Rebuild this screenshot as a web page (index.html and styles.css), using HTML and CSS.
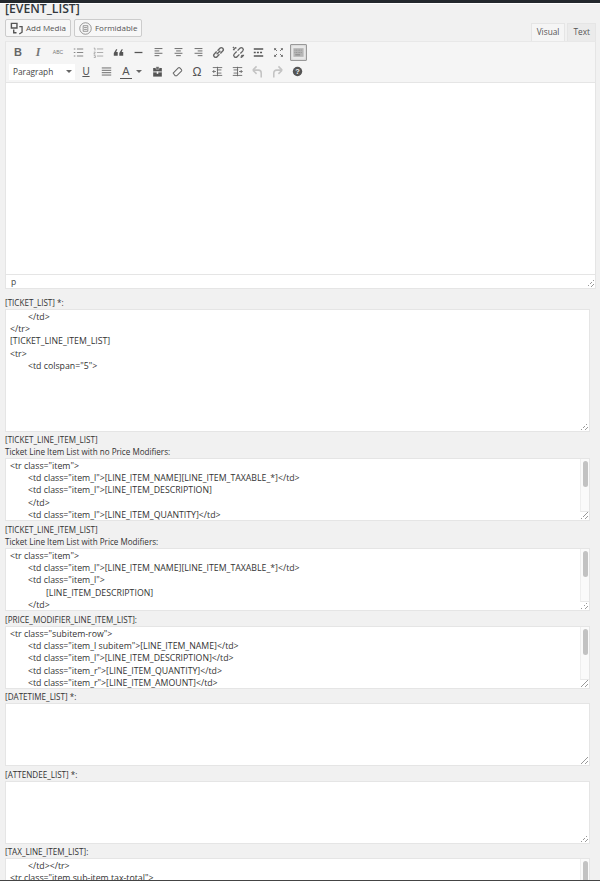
FILE: index.html
```html
<!DOCTYPE html>
<html lang="en">
<head>
<meta charset="utf-8">
<title>Event list editor</title>
<link rel="stylesheet" href="styles.css">
</head>
<body>
<main class="page">
  <h2 class="title">[EVENT_LIST]</h2>
  <div class="editor-head">
    <div class="media-buttons">
      <button class="btn"><svg class="btn-ic" viewBox="0 0 14 14"><path d="M1.500 1.500h6v5h-6z" fill="none" stroke="#555" stroke-width="1.500"/><path d="M4 8v3.500h3" fill="none" stroke="#555" stroke-width="1.500"/><path d="M10 5h3v6l-3 2" fill="none" stroke="#555" stroke-width="1.400"/></svg>Add Media</button>
      <button class="btn"><svg class="btn-ic" viewBox="0 0 14 14"><circle cx="7" cy="7" r="6.200" fill="none" stroke="#777" stroke-width=".8"/><path d="M4.500 4h5v6h-5z M5.500 6h3 M5.500 8h3" fill="none" stroke="#777" stroke-width=".8"/></svg>Formidable</button>
    </div>
    <div class="tabs"><span class="tab tab-on">Visual</span><span class="tab">Text</span></div>
  </div>
  <section class="editor">
    <div class="toolbar">
      <div class="tool-row">
        <span class="ti ti-b">B</span>
        <span class="ti ti-i">I</span>
        <span class="ti ti-abc">ABC</span>
        <span class="ti"><svg viewBox="0 0 14 14"><path d="M1 2.500h2M5 2.500h8M1 7h2M5 7h8M1 11.500h2M5 11.500h8" stroke="#888" stroke-width="1.300"/></svg></span>
        <span class="ti"><svg viewBox="0 0 14 14"><path d="M1 1.500h1.500v3M1 6.500h2L1 9h2M1 11h2v2.500H1M5 2.500h8M5 7h8M5 11.500h8" fill="none" stroke="#999" stroke-width="1"/></svg></span>
        <span class="ti"><svg viewBox="0 0 14 14"><path d="M1 11V7.500L4 3h1.500L4 6.500h2V11zM8 11V7.500L11 3h1.500L11 6.500h2V11z" fill="#555"/></svg></span>
        <span class="ti"><svg viewBox="0 0 14 14"><path d="M2 7h10" stroke="#555" stroke-width="1.600"/></svg></span>
        <span class="ti"><svg viewBox="0 0 14 14"><path d="M2 2h10M2 5h6M2 8h10M2 11h6" stroke="#666" stroke-width="1.200"/></svg></span>
        <span class="ti"><svg viewBox="0 0 14 14"><path d="M2 2h10M4 5h6M2 8h10M4 11h6" stroke="#666" stroke-width="1.200"/></svg></span>
        <span class="ti"><svg viewBox="0 0 14 14"><path d="M2 2h10M6 5h6M2 8h10M6 11h6" stroke="#666" stroke-width="1.200"/></svg></span>
        <span class="ti ti-lg"><svg viewBox="0 0 14 14"><path d="M5 9 9 5M5 6 2.500 8.500a2 2 0 0 0 3 3L8 9M6 5l2.500-2.500a2 2 0 0 1 3 3L9 8" fill="none" stroke="#666" stroke-width="1.500"/></svg></span>
        <span class="ti ti-lg"><svg viewBox="0 0 14 14"><path d="M5 6 2.500 8.500a2 2 0 0 0 3 3L8 9M6 5l2.500-2.500a2 2 0 0 1 3 3L9 8M1 1l2 2M12 12l-2-2M4 1v2M1 4h2M10 13v-2M13 10h-2" fill="none" stroke="#666" stroke-width="1.400"/></svg></span>
        <span class="ti"><svg viewBox="0 0 14 14"><path d="M1 2.500h12M1 11.500h12" stroke="#555" stroke-width="2"/><path d="M1 7h2.500M5 7h2.500M9 7h2.500" stroke="#555" stroke-width="1.600"/></svg></span>
        <span class="ti"><svg viewBox="0 0 14 14"><path d="M2 2l3 3M12 2 9 5M2 12l3-3M12 12 9 9" stroke="#666" stroke-width="1.200"/><path d="M1.500 1.500h3l-3 3zM12.500 1.500v3l-3-3zM1.500 12.500v-3l3 3zM12.500 12.500h-3l3-3z" fill="#666"/></svg></span>
        <span class="ti ti-active"><svg viewBox="0 0 14 14"><rect x=".5" y="1.500" width="13" height="11" fill="#b5b5b5"/><path d="M2 4h10M2 7h10" stroke="#888" stroke-dasharray="1 1"/><path d="M3 10h6" stroke="#777"/></svg></span>
      </div>
      <div class="tool-row">
        <span class="select">Paragraph<i class="caret"></i></span>
        <span class="ti ti-u">U</span>
        <span class="ti"><svg viewBox="0 0 14 14"><path d="M1 2.500h12M1 5.500h12M1 8.500h12M1 11.500h12" stroke="#666" stroke-width="1.200"/></svg></span>
        <span class="ti ti-a">A<i class="a-line"></i></span>
        <i class="caret caret-a"></i>
        <span class="ti"><svg viewBox="0 0 14 14"><path d="M1.500 2.500h11v11h-11z" fill="#555"/><path d="M5 1h4v3H5z" fill="#555" stroke="#f5f5f5" stroke-width=".6"/><path d="M1.500 7.500h11" stroke="#f5f5f5" stroke-width="1.200"/><path d="M6 7v3h2V7" fill="#f5f5f5"/></svg></span>
        <span class="ti"><svg viewBox="0 0 14 14"><path d="M1.500 9 8 2.500a1.500 1.500 0 0 1 2 0l2 2a1.500 1.500 0 0 1 0 2L6 12.500H4z" fill="none" stroke="#666" stroke-width="1.300"/></svg></span>
        <span class="ti ti-om">Ω</span>
        <span class="ti"><svg viewBox="0 0 14 14"><path d="M1 2h12M6 5h6M6 9h6M1 12h12M7 1v12" stroke="#666" stroke-width="1.100"/><path d="M1 7h4M3 5 1 7l2 2" fill="none" stroke="#666" stroke-width="1.100"/></svg></span>
        <span class="ti"><svg viewBox="0 0 14 14"><path d="M1 2h12M2 5h6M2 9h6M1 12h12M7 1v12" stroke="#666" stroke-width="1.100"/><path d="M9 7h4M11 5l2 2-2 2" fill="none" stroke="#666" stroke-width="1.100"/></svg></span>
        <span class="ti ti-lg"><svg viewBox="0 0 14 14"><path d="M2 5.500 6 1.500M2 5.500l4 4" fill="none" stroke="#c4c4c4" stroke-width="1.700"/><path d="M2.500 5.500H8a3 3 0 0 1 3 3v5" fill="none" stroke="#c4c4c4" stroke-width="1.700"/></svg></span>
        <span class="ti ti-lg"><svg viewBox="0 0 14 14"><path d="M12 5.500 8 1.500M12 5.500l-4 4" fill="none" stroke="#c4c4c4" stroke-width="1.700"/><path d="M11.500 5.500H6a3 3 0 0 0-3 3v5" fill="none" stroke="#c4c4c4" stroke-width="1.700"/></svg></span>
        <span class="ti"><svg viewBox="0 0 14 14"><circle cx="7" cy="7" r="6" fill="#555"/><text x="7" y="10.500" class="help-q">?</text></svg></span>
      </div>
    </div>
    <div class="content"></div>
    <div class="status">p<i class="grip"></i></div>
  </section>

  <section class="field m8">
    <div class="label">[TICKET_LIST] *:</div>
    <div class="area h-tall"><pre>	&lt;/td&gt;
&lt;/tr&gt;
[TICKET_LINE_ITEM_LIST]
&lt;tr&gt;
	&lt;td colspan="5"&gt;</pre><i class="grip"></i></div>
  </section>

  <section class="field m2">
    <div class="label">[TICKET_LINE_ITEM_LIST]<br>Ticket Line Item List with no Price Modifiers:</div>
    <div class="area h-short"><pre>&lt;tr class="item"&gt;
	&lt;td class="item_l"&gt;[LINE_ITEM_NAME][LINE_ITEM_TAXABLE_*]&lt;/td&gt;
	&lt;td class="item_l"&gt;[LINE_ITEM_DESCRIPTION]
	&lt;/td&gt;
	&lt;td class="item_l"&gt;[LINE_ITEM_QUANTITY]&lt;/td&gt;</pre><div class="sb"><b></b></div><i class="grip"></i></div>
  </section>

  <section class="field m3">
    <div class="label">[TICKET_LINE_ITEM_LIST]<br>Ticket Line Item List with Price Modifiers:</div>
    <div class="area h-short"><pre>&lt;tr class="item"&gt;
	&lt;td class="item_l"&gt;[LINE_ITEM_NAME][LINE_ITEM_TAXABLE_*]&lt;/td&gt;
	&lt;td class="item_l"&gt;
		[LINE_ITEM_DESCRIPTION]
	&lt;/td&gt;</pre><div class="sb"><b></b></div><i class="grip"></i></div>
  </section>

  <section class="field m3">
    <div class="label">[PRICE_MODIFIER_LINE_ITEM_LIST]:</div>
    <div class="area h-short"><pre>&lt;tr class="subitem-row"&gt;
	&lt;td class="item_l subitem"&gt;[LINE_ITEM_NAME]&lt;/td&gt;
	&lt;td class="item_l"&gt;[LINE_ITEM_DESCRIPTION]&lt;/td&gt;
	&lt;td class="item_r"&gt;[LINE_ITEM_QUANTITY]&lt;/td&gt;
	&lt;td class="item_r"&gt;[LINE_ITEM_AMOUNT]&lt;/td&gt;</pre><div class="sb"><b></b></div><i class="grip"></i></div>
  </section>

  <section class="field m2">
    <div class="label">[DATETIME_LIST] *:</div>
    <div class="area h-short"><i class="grip"></i></div>
  </section>

  <section class="field m3">
    <div class="label">[ATTENDEE_LIST] *:</div>
    <div class="area h-short"><i class="grip"></i></div>
  </section>

  <section class="field m2">
    <div class="label">[TAX_LINE_ITEM_LIST]:</div>
    <div class="area h-short"><pre>	&lt;/td&gt;&lt;/tr&gt;
&lt;tr class="item sub-item tax-total"&gt;</pre><div class="sb"><b></b></div></div>
  </section>
</main>
<div class="topbar"></div>
<div class="bottombar"></div>
</body>
</html>
```
FILE: styles.css
```css
* { box-sizing: border-box; }
html, body { margin: 0; height: 881px; overflow: hidden; }
body {
  position: relative;
  background: #f1f1f1;
  font-family: "Open Sans", sans-serif;
  color: #444;
}
.topbar { position: absolute; top: 0; left: 0; right: 0; height: 4px; background: #23282d; border-bottom: 1px solid #fff; }
.page { padding: 4px 4px 0 5px; height: 880px; overflow: hidden; }
.bottombar { position: absolute; left: 0; right: 0; bottom: 0; height: 1px; background: #444; }

.title {
  margin: 0;
  height: 10px;
  font-size: 12.200px;
  line-height: 10px;
  font-weight: 600;
  color: #32373c;
}
.editor-head { display: flex; justify-content: space-between; align-items: flex-end; height: 27px; }
.media-buttons { display: flex; gap: 3px; margin-top: 5px; align-self: flex-start; }
.btn {
  display: flex; align-items: center; gap: 3px;
  height: 18px; padding: 0 4px;
  font: 8px/16px "Open Sans", sans-serif;
  color: #555; background: #f7f7f7;
  border: 1px solid #ccc; border-radius: 2px;
}
.btn-ic { width: 13px; height: 13px; }
.tabs { display: flex; gap: 2px; }
.tab {
  height: 18px; padding: 0 5px;
  font-size: 8.300px; line-height: 16px; color: #555;
  background: #ebebeb; border: 1px solid #e5e5e5; border-bottom: 0;
}
.tab-on { background: #f5f5f5; border-color: #e5e5e5; }

.editor { width: 591px; border: 1px solid #e5e5e5; border-top: 1px solid #e8e8e8; background: #fff; }
.toolbar { height: 41px; background: #f5f5f5; border-bottom: 1px solid #e5e5e5; padding: 1px 0 0 2px; }
.tool-row { display: flex; align-items: center; height: 19px; }
.ti {
  flex: 0 0 20px; height: 17px;
  display: flex; align-items: center; justify-content: center;
  color: #555; font-family: "Liberation Sans", sans-serif; font-size: 11px; line-height: 1;
  position: relative;
}
.ti svg { width: 11px; height: 11px; }
.ti-lg svg { width: 13px; height: 13px; }
.ti-b { font-weight: 700; font-size: 11px; color: #666; }
.ti-i { font: italic 700 12px "Liberation Serif", serif; color: #777; }
.ti-abc { font-size: 5px; color: #777; }
.ti-u { font-size: 10px; text-decoration: underline; }
.ti-a { font-size: 11px; font-weight: 400; }
.a-line { position: absolute; left: 4px; right: 4px; bottom: 1px; height: 1px; background: #555; }
.ti-om { font-size: 12px; }
.ti-active { flex-basis: 17px; margin-left: 2px; background: #e9e9e9; border: 1px solid #999; border-radius: 1px; box-shadow: inset 0 0 2px #bbb; }
.select {
  flex: 0 0 66px; height: 16px; margin: 0 1px 0 1px; padding-left: 4px;
  background: #fff; font-size: 8.300px; line-height: 15px; color: #444; position: relative;
}
.caret { width: 0; height: 0; border: 3px solid transparent; border-top: 3.500px solid #666; border-bottom: 0; }
.select .caret { position: absolute; right: 3px; top: 6px; }
.caret-a { margin: 0 5px 0 0; }
.help-q { font: 700 9.500px "Liberation Sans", sans-serif; fill: #f5f5f5; text-anchor: middle; }

.content { height: 191px; background: #fff; }
.status {
  height: 14px; padding-left: 5px; background: #fff; border-top: 1px solid #e5e5e5;
  font-size: 8.500px; line-height: 14px; color: #444; position: relative;
}
.grip {
  position: absolute; right: 1px; bottom: 1px; width: 7px; height: 7px;
  background: linear-gradient(135deg, transparent 0 50%, #999 50% 57%, transparent 57% 72%, #999 72% 80%, transparent 80%);
}

.label { font-size: 8.100px; line-height: 12px; color: #333; }
.field { width: 585px; }
.m2 { margin-top: 2px; }
.m3 { margin-top: 3px; }
.m8 { margin-top: 8px; }
.area {
  position: relative; background: #fff; border: 1px solid #e5e5e5; overflow: hidden;
  padding: 0 0 0 4px;
}
.area pre {
  margin: 0; padding-top: 1px;
  font: 8.750px/12.200px "Open Sans", sans-serif; color: #333; tab-size: 18px;
}
.h-tall { height: 123px; }
.h-short { height: 63px; }
.sb {
  position: absolute; top: 0; right: 0; bottom: 8px; width: 9px;
  background: #fafafa; border-left: 1px solid #eee; border-bottom: 1px solid #e8e8e8;
  display: flex; justify-content: center;
}
.sb b { width: 5px; height: 26px; margin-top: 2px; border-radius: 3px; background: #c2c2c2; }
```
